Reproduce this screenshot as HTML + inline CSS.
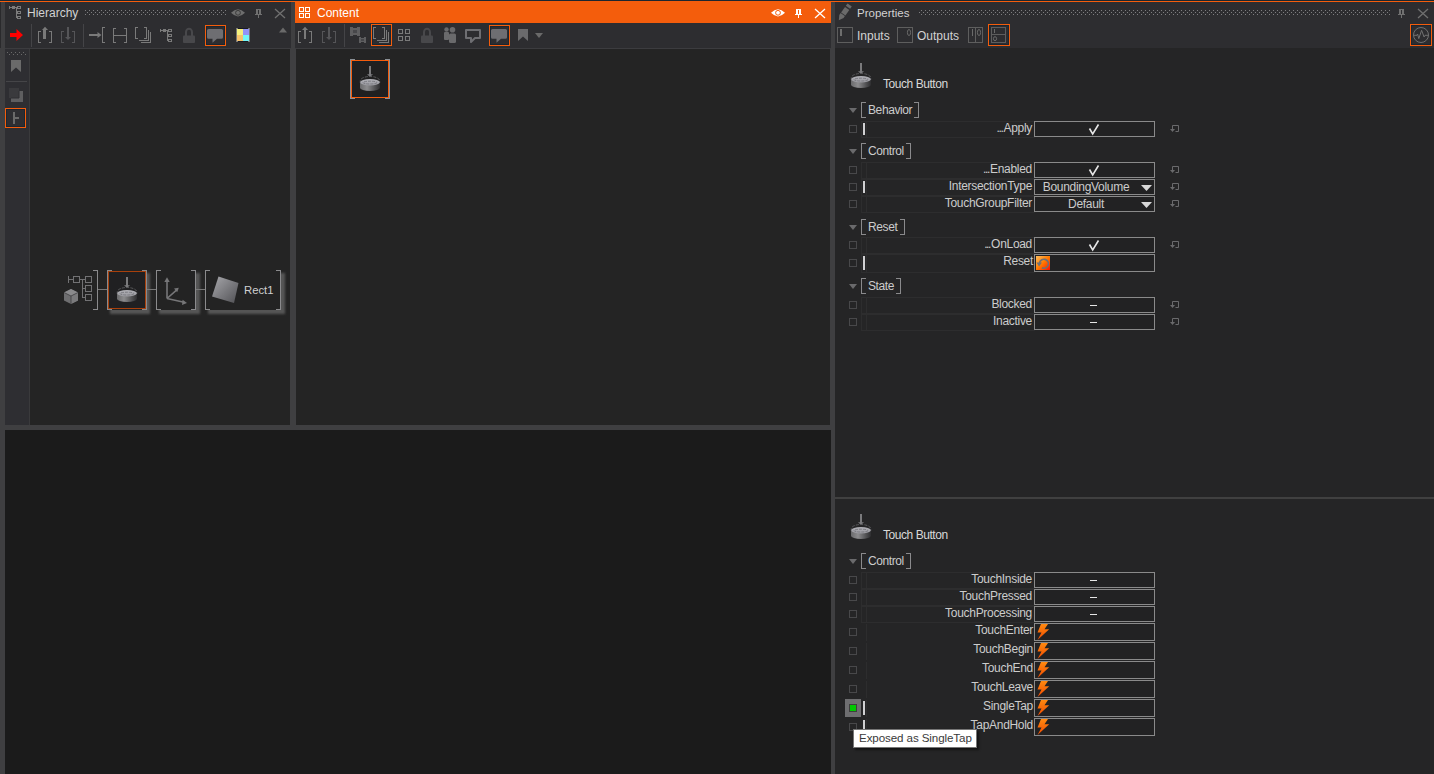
<!DOCTYPE html>
<html><head><meta charset="utf-8">
<style>
*{margin:0;padding:0;box-sizing:border-box}
html,body{width:1434px;height:774px;overflow:hidden;background:#3f3f41;font-family:"Liberation Sans",sans-serif;}
.a{position:absolute}
.t{position:absolute;white-space:nowrap;color:#d2d2d2;font-size:12px;line-height:14px}
.p{position:absolute;white-space:nowrap;color:#cccccc;font-size:12px;letter-spacing:-0.3px;line-height:13px}
.el{letter-spacing:-1.35px;margin-right:1px}
svg{position:absolute;left:0;top:0}
</style></head><body>
<div class="a" style="left:0px;top:0px;width:1434px;height:1px;background:#1c2630;"></div><div class="a" style="left:0px;top:1px;width:1434px;height:1px;background:#f45d0c;"></div><div class="a" style="left:5px;top:2px;width:286px;height:46px;background:#2d2d30;"></div><div class="a" style="left:0px;top:2px;width:1px;height:46px;background:#2a2a2c;"></div><div class="a" style="left:5px;top:48px;width:286px;height:1px;background:#3c3c3f;"></div><div class="a" style="left:5px;top:49px;width:24px;height:376px;background:#2e2e32;"></div><div class="a" style="left:29px;top:49px;width:1px;height:376px;background:#3a3a3c;"></div><div class="a" style="left:30px;top:49px;width:260px;height:376px;background:#242424;"></div><div class="a" style="left:295px;top:2px;width:536px;height:21px;background:#f45d0c;"></div><div class="a" style="left:295px;top:23px;width:536px;height:25px;background:#2d2d30;"></div><div class="a" style="left:295px;top:48px;width:536px;height:1px;background:#3c3c3f;"></div><div class="a" style="left:296px;top:49px;width:534px;height:376px;background:#242424;"></div><div class="a" style="left:5px;top:430px;width:826px;height:344px;background:#1b1b1b;"></div><div class="a" style="left:835px;top:2px;width:599px;height:46px;background:#2d2d30;"></div><div class="a" style="left:835px;top:48px;width:599px;height:449px;background:#252526;"></div><div class="a" style="left:835px;top:497px;width:599px;height:2px;background:#404040;"></div><div class="a" style="left:835px;top:499px;width:599px;height:275px;background:#252526;"></div><svg width="1434" height="774" viewBox="0 0 1434 774"><defs><pattern id="dots" x="0" y="0" width="4" height="4" patternUnits="userSpaceOnUse"><rect x="1" y="2" width="1" height="1" fill="#7e7e80"/><rect x="3" y="0" width="1" height="1" fill="#7e7e80"/></pattern><pattern id="dots2" x="0" y="0" width="4" height="4" patternUnits="userSpaceOnUse"><rect x="3" y="0" width="1" height="1" fill="#6a6a6a"/><rect x="1" y="2" width="1" height="1" fill="#6a6a6a"/></pattern></defs><rect x="85" y="10" width="142" height="5" fill="url(#dots)"/><rect x="919" y="10" width="472" height="5" fill="url(#dots)"/><rect x="7" y="52" width="20" height="3" fill="url(#dots2)"/><g fill="none" stroke="#7c7c7c" stroke-width="1" shape-rendering="crispEdges"><path d="M9.5 6 V9 M9 7.5 H17 M16.5 7.5 V17.5 M16.5 12.5 H18 M16.5 17.5 H18"/><rect x="12.5" y="6.5" width="2" height="2"/><rect x="17.5" y="6.5" width="3" height="2"/><rect x="17.5" y="11.5" width="3" height="2"/><rect x="17.5" y="16.5" width="3" height="2"/></g><path d="M231 12.8 Q238 5.5 245 12.8 Q238 20 231 12.8Z" fill="#6e6e6e"/><circle cx="238" cy="12.8" r="2.4" fill="none" stroke="#3a3a3a" stroke-width="1"/><g fill="#707070" shape-rendering="crispEdges"><rect x="256" y="9" width="5" height="1"/><rect x="256" y="9" width="2" height="5"/><rect x="259" y="9" width="2" height="5"/><rect x="255" y="14" width="7" height="1"/><rect x="258" y="15" width="1" height="3"/></g><path d="M275 9 L285 18 M285 9 L275 18" stroke="#707070" stroke-width="1.3" fill="none"/><path d="M10 33H16.5V29L23 35L16.5 41V37H10Z" fill="#ff0000"/><rect x="31" y="24" width="1" height="23" fill="#444447"/><rect x="83" y="24" width="1" height="23" fill="#444447"/><path d="M41 31.5H38.5V42.5H41" fill="none" stroke="#7a7a7a" shape-rendering="crispEdges"/><path d="M49 31.5H51.5V42.5H49" fill="none" stroke="#7a7a7a" shape-rendering="crispEdges"/><path d="M44 39V29.5" stroke="#7a7a7a" stroke-width="2" fill="#7a7a7a"/><path d="M42 30L45 26.8L48 30Z" fill="#7a7a7a"/><rect x="44" y="29" width="2" height="10" fill="#7a7a7a"/><path d="M64 31.5H61.5V42.5H64" fill="none" stroke="#555558" shape-rendering="crispEdges"/><path d="M72 31.5H74.5V42.5H72" fill="none" stroke="#555558" shape-rendering="crispEdges"/><rect x="67" y="27" width="2" height="10" fill="#555558"/><path d="M65 37L68 40L71 37Z" fill="#555558"/><rect x="89" y="34" width="9" height="2" fill="#7a7a7a"/><path d="M97.5 32L101.5 35L97.5 38Z" fill="#7a7a7a"/><path d="M105 27.5H102.5V42.5H105" fill="none" stroke="#7a7a7a" shape-rendering="crispEdges"/><path d="M116 28.5H113.5V42.5H116" fill="none" stroke="#7a7a7a" shape-rendering="crispEdges"/><path d="M124 28.5H126.5V42.5H124" fill="none" stroke="#7a7a7a" shape-rendering="crispEdges"/><rect x="113" y="35" width="14" height="1" fill="#7a7a7a"/><path d="M138 27.5H135.5V38.5H138" fill="none" stroke="#7a7a7a" shape-rendering="crispEdges"/><path d="M144 27.5H146.5V38.5H144" fill="none" stroke="#7a7a7a" shape-rendering="crispEdges"/><path d="M139 40.5H148.5V30 M141 42.5H150.5V32" fill="none" stroke="#7a7a7a" shape-rendering="crispEdges"/><g fill="none" stroke="#7a7a7a" stroke-width="1" shape-rendering="crispEdges"><path d="M160.5 29 V32 M160 30.5 H168 M167.5 30.5 V40.5 M167.5 35.5 H169 M167.5 40.5 H169"/><rect x="163.5" y="29.5" width="2" height="2"/><rect x="168.5" y="29.5" width="3" height="2"/><rect x="168.5" y="34.5" width="3" height="2"/><rect x="168.5" y="39.5" width="3" height="2"/></g><rect x="183" y="35.5" width="12" height="7.5" rx="1" fill="#48484b"/><path d="M186 36V32A3 3.3 0 0 1 192 32V36" fill="none" stroke="#48484b" stroke-width="2"/><rect x="205.5" y="25.5" width="20" height="20" fill="none" stroke="#f45d0c" shape-rendering="crispEdges"/><rect x="206.5" y="26.5" width="18" height="18" fill="none" stroke="#1d2630" shape-rendering="crispEdges"/><path d="M208.5 29H221.5A1.5 1.5 0 0 1 223 30.5V37.3A1.5 1.5 0 0 1 221.5 38.8H217L212.5 42.8V38.8H208.5A1.5 1.5 0 0 1 207 37.3V30.5A1.5 1.5 0 0 1 208.5 29Z" fill="#6e6e72"/><rect x="236" y="28" width="14" height="14" fill="#777"/><rect x="237" y="29" width="6" height="6" fill="#f4f07c"/><rect x="243" y="29" width="6" height="6" fill="#9393f7"/><rect x="237" y="35" width="6" height="6" fill="#f6c36c"/><rect x="243" y="35" width="6" height="6" fill="#72f6f6"/><rect x="238" y="28" width="10" height="1" fill="#1a1a22"/><rect x="238" y="41" width="10" height="1" fill="#1a1a22"/><path d="M279 32.5L283 27.5L287 32.5Z" fill="#6a6a6a"/><path d="M11 60H21V72L16 67.5L11 72Z" fill="#6a6a6a"/><rect x="6" y="81" width="21" height="1" fill="#454548"/><rect x="9" y="88" width="10" height="10" fill="#3a3a3d"/><path d="M19 91H23V102H11V98H19Z" fill="#5e5e60"/><path d="M19 91V98H11" fill="none" stroke="#2e2e32" stroke-width="1"/><rect x="5.5" y="108.5" width="20" height="19" fill="none" stroke="#f45d0c" shape-rendering="crispEdges"/><rect x="6.5" y="109.5" width="18" height="17" fill="none" stroke="#1d2630" shape-rendering="crispEdges"/><rect x="13" y="112" width="2" height="12" fill="#6a6a6a"/><rect x="15" y="117" width="4" height="2" fill="#6a6a6a"/><g fill="none" stroke="#fff" shape-rendering="crispEdges"><rect x="299.5" y="7.5" width="4" height="4"/><rect x="305.5" y="7.5" width="4" height="4"/><rect x="299.5" y="13.5" width="4" height="4"/><rect x="305.5" y="13.5" width="4" height="4"/></g><path d="M771 12.8 Q778 5.5 785 12.8 Q778 20 771 12.8Z" fill="#ffffff"/><circle cx="778" cy="12.8" r="2.4" fill="none" stroke="#f45d0c" stroke-width="1"/><g fill="#ffffff" shape-rendering="crispEdges"><rect x="796" y="9" width="5" height="1"/><rect x="796" y="9" width="2" height="5"/><rect x="799" y="9" width="2" height="5"/><rect x="795" y="14" width="7" height="1"/><rect x="798" y="15" width="1" height="3"/></g><path d="M815 9 L825 18 M825 9 L815 18" stroke="#ffffff" stroke-width="1.3" fill="none"/><path d="M301 31.5H298.5V42.5H301" fill="none" stroke="#7a7a7a" shape-rendering="crispEdges"/><path d="M309 31.5H311.5V42.5H309" fill="none" stroke="#7a7a7a" shape-rendering="crispEdges"/><path d="M302 30L305 26.8L308 30Z" fill="#7a7a7a"/><rect x="304" y="29" width="2" height="10" fill="#7a7a7a"/><path d="M325 31.5H322.5V42.5H325" fill="none" stroke="#555558" shape-rendering="crispEdges"/><path d="M333 31.5H335.5V42.5H333" fill="none" stroke="#555558" shape-rendering="crispEdges"/><rect x="328" y="27" width="2" height="10" fill="#555558"/><path d="M326 37L329 40L332 37Z" fill="#555558"/><rect x="344" y="24" width="1" height="23" fill="#444447"/><path d="M350 27H353V28H357V27H360V36H357V35H353V36H350Z M353 30V33H357V30Z" fill="#5e5e60" fill-rule="evenodd"/><rect x="353" y="30" width="4" height="3" fill="#47474a"/><path d="M359 37H361V38H364V37H366V43H364V42H361V43H359Z M361 39V41H364V39Z" fill="#5e5e60" fill-rule="evenodd"/><rect x="361" y="39" width="3" height="2" fill="#47474a"/><rect x="371.5" y="24.5" width="20" height="21" fill="none" stroke="#f45d0c" shape-rendering="crispEdges"/><rect x="372.5" y="25.5" width="18" height="19" fill="none" stroke="#1d2630" shape-rendering="crispEdges"/><path d="M376 27.5H373.5V38.5H376" fill="none" stroke="#7a7a7a" shape-rendering="crispEdges"/><path d="M382 27.5H384.5V38.5H382" fill="none" stroke="#7a7a7a" shape-rendering="crispEdges"/><path d="M377 40.5H386.5V30 M379 42.5H388.5V32" fill="none" stroke="#7a7a7a" shape-rendering="crispEdges"/><g fill="none" stroke="#7a7a7a" shape-rendering="crispEdges"><rect x="398.5" y="29.5" width="4" height="4"/><rect x="405.5" y="29.5" width="4" height="4"/><rect x="398.5" y="36.5" width="4" height="4"/><rect x="405.5" y="36.5" width="4" height="4"/></g><rect x="421" y="35.5" width="12" height="7.5" rx="1" fill="#48484b"/><path d="M424 36V32A3 3.3 0 0 1 430 32V36" fill="none" stroke="#48484b" stroke-width="2"/><g fill="#6a6a6c"><circle cx="446.5" cy="29.5" r="2.2"/><rect x="444" y="32" width="5" height="8" rx="1"/><circle cx="452.5" cy="29.8" r="2.8"/><rect x="449" y="33.5" width="7" height="9.5" rx="1.5"/></g><path d="M466 30H480V38H475L471 42V38H466Z" fill="none" stroke="#6e6e72" stroke-width="2" stroke-linejoin="round"/><rect x="489.5" y="25.5" width="20" height="20" fill="none" stroke="#f45d0c" shape-rendering="crispEdges"/><rect x="490.5" y="26.5" width="18" height="18" fill="none" stroke="#1d2630" shape-rendering="crispEdges"/><path d="M492.5 29H505.5A1.5 1.5 0 0 1 507 30.5V37.3A1.5 1.5 0 0 1 505.5 38.8H501L496.5 42.8V38.8H492.5A1.5 1.5 0 0 1 491 37.3V30.5A1.5 1.5 0 0 1 492.5 29Z" fill="#6e6e72"/><path d="M518 29H528V41L523 36.5L518 41Z" fill="#6a6a6c"/><path d="M535 33L539 38L543 33Z" fill="#6a6a6a"/><path d="M838.8 20.2L839.3 14.9L840.6 13.1L844.9 16.1L843.6 17.9Z" fill="#6a6a6a"/><path d="M841.1 12.4L845.0 7.0L849.3 10.0L845.4 15.4Z" fill="#6a6a6a"/><path d="M845.8 5.8L847.6 3.4L851.8 6.4L850.1 8.8Z" fill="#6a6a6a"/><rect x="837.5" y="27.5" width="15" height="15" fill="none" stroke="#5e5e5e" shape-rendering="crispEdges"/><rect x="840" y="29" width="2" height="7" fill="#6e6e6e"/><rect x="897.5" y="27.5" width="15" height="15" fill="none" stroke="#5e5e5e" shape-rendering="crispEdges"/><ellipse cx="909" cy="32.5" rx="1.6" ry="3" fill="none" stroke="#6a6a6a" stroke-width="1"/><rect x="968.5" y="27.5" width="14" height="15" fill="none" stroke="#5e5e5e" shape-rendering="crispEdges"/><rect x="975" y="28" width="1" height="14" fill="#5e5e5e"/><rect x="972" y="29" width="1" height="7" fill="#6a6a6a"/><ellipse cx="979" cy="32.5" rx="1.6" ry="3" fill="none" stroke="#6a6a6a"/><rect x="988.5" y="24.5" width="21" height="21" fill="none" stroke="#f45d0c" shape-rendering="crispEdges"/><rect x="989.5" y="25.5" width="19" height="19" fill="none" stroke="#1d2630" shape-rendering="crispEdges"/><rect x="991.5" y="27.5" width="14" height="15" fill="none" stroke="#5e5e5e" shape-rendering="crispEdges"/><rect x="992" y="34" width="13" height="1" fill="#5e5e5e"/><rect x="994" y="29" width="1" height="4" fill="#6a6a6a"/><ellipse cx="995" cy="38.7" rx="1.6" ry="2" fill="none" stroke="#6a6a6a"/><g fill="#707070" shape-rendering="crispEdges"><rect x="1399" y="9" width="5" height="1"/><rect x="1399" y="9" width="2" height="5"/><rect x="1402" y="9" width="2" height="5"/><rect x="1398" y="14" width="7" height="1"/><rect x="1401" y="15" width="1" height="3"/></g><path d="M1418 9 L1428 18 M1428 9 L1418 18" stroke="#707070" stroke-width="1.3" fill="none"/><rect x="1410.5" y="24.5" width="21" height="21" fill="none" stroke="#f45d0c" shape-rendering="crispEdges"/><rect x="1411.5" y="25.5" width="19" height="19" fill="none" stroke="#1d2630" shape-rendering="crispEdges"/><circle cx="1421" cy="35" r="7.5" fill="none" stroke="#707070"/><path d="M1414 35.3H1417L1417.6 34L1418.8 38.6L1421.6 30.3L1424.1 37L1425 35.3H1428.5" fill="none" stroke="#707070" stroke-linejoin="round"/><defs><linearGradient id="cyl" x1="0" x2="1" y1="0" y2="0"><stop offset="0" stop-color="#6a6a6c"/><stop offset=".35" stop-color="#8c8c8e"/><stop offset=".8" stop-color="#4a4a4c"/><stop offset="1" stop-color="#2e2e30"/></linearGradient><linearGradient id="cyltop" x1="0" x2="0" y1="0" y2="1"><stop offset="0" stop-color="#b0b0b6"/><stop offset="1" stop-color="#9a9aa0"/></linearGradient><linearGradient id="rectg" x1="0" y1="0" x2="1" y2="1"><stop offset="0" stop-color="#a8a8ac"/><stop offset="1" stop-color="#505054"/></linearGradient><symbol id="tb" viewBox="0 0 20 25" overflow="visible"><rect x="9" y="0" width="2" height="9" fill="#7a7a7c"/><path d="M7 8.3L13 8.3L10 11Z" fill="#7a7a7c"/><path d="M0 16.5V21.7A10 3.3 0 0 0 20 21.7V16.5Z" fill="url(#cyl)"/><path d="M0.3 17V14.8A9.7 4.3 0 0 1 19.7 14.8V17" fill="none" stroke="#58585a" stroke-width="1" stroke-dasharray="3 1.2"/><ellipse cx="10" cy="16.3" rx="9.8" ry="3.2" fill="url(#cyltop)"/><ellipse cx="10" cy="16.6" rx="7" ry="1.4" fill="none" stroke="#7c7c82" stroke-width="1" stroke-dasharray="3 1"/></symbol></defs><g fill="none" stroke="#727274" shape-rendering="crispEdges"><path d="M68.5 276V283M68 279.5H73M80 279.5H85M82.5 279.5V297.5M82.5 288.5H85M82.5 297.5H85"/><rect x="73.5" y="276.5" width="6" height="6"/><rect x="85.5" y="276.5" width="6" height="6"/><rect x="85.5" y="285.5" width="6" height="6"/><rect x="85.5" y="294.5" width="6" height="6"/></g><path d="M64 292.5L71 289L78 292.5V300.5L71 304L64 300.5Z" fill="#6e6e70"/><path d="M71 296L78 292.5V300.5L71 304Z" fill="#7a7a7c"/><path d="M64 292.5L71 289L78 292.5L71 296Z" fill="#8a8a8c"/><path d="M64 292.5L71 296L78 292.5M71 296V304" fill="none" stroke="#3e3e40" stroke-width=".8"/><defs><filter id="blur1" x="-50%" y="-50%" width="200%" height="200%"><feGaussianBlur stdDeviation="1.3"/></filter></defs><rect x="110" y="273" width="40" height="41" fill="#555555" filter="url(#blur1)"/><rect x="107" y="270" width="39" height="40" fill="#232323"/><rect x="159" y="273" width="41" height="41" fill="#555555" filter="url(#blur1)"/><rect x="156" y="270" width="40" height="40" fill="#232323"/><rect x="208" y="273" width="77" height="41" fill="#555555" filter="url(#blur1)"/><rect x="205" y="270" width="76" height="40" fill="#232323"/><path d="M93 270.5H97.5V309.5H93" fill="none" stroke="#8a8a8c" shape-rendering="crispEdges"/><rect x="98" y="289" width="9" height="1" fill="#787878"/><rect x="146" y="289" width="10" height="1" fill="#787878"/><rect x="196" y="289" width="9" height="1" fill="#787878"/><path d="M112 270.5H107.5V309.5H112" fill="none" stroke="#8a8a8c" shape-rendering="crispEdges"/><path d="M142 270.5H146.5V309.5H142" fill="none" stroke="#8a8a8c" shape-rendering="crispEdges"/><rect x="108.5" y="271.5" width="37" height="37" fill="#202022" stroke="#a8400c" shape-rendering="crispEdges"/><g transform="translate(117 277)"><rect x="9" y="0" width="2" height="9" fill="#7a7a7c"/><path d="M7 8.3L13 8.3L10 11Z" fill="#7a7a7c"/><path d="M0 16.5V21.7A10 3.3 0 0 0 20 21.7V16.5Z" fill="url(#cyl)"/><path d="M0.3 17V14.8A9.7 4.3 0 0 1 19.7 14.8V17" fill="none" stroke="#58585a" stroke-width="1" stroke-dasharray="3 1.2"/><ellipse cx="10" cy="16.3" rx="9.8" ry="3.2" fill="url(#cyltop)"/><ellipse cx="10" cy="16.6" rx="7" ry="1.4" fill="none" stroke="#7c7c82" stroke-width="1" stroke-dasharray="3 1"/></g><path d="M161 270.5H156.5V309.5H161" fill="none" stroke="#8a8a8c" shape-rendering="crispEdges"/><path d="M191 270.5H195.5V309.5H191" fill="none" stroke="#8a8a8c" shape-rendering="crispEdges"/><g stroke="#767678" stroke-width="1.6" fill="none"><path d="M167 298.5V281M167 298.5L176.5 290.2M167 298.5L184 302.3"/></g><path d="M164.3 282L167 277.3L169.7 282Z" fill="#767678"/><path d="M174 288.6L178.8 287.8L177.2 292.2Z" fill="#767678"/><path d="M182.6 299.8L187 303L182 305Z" fill="#767678"/><path d="M210 270.5H205.5V309.5H210" fill="none" stroke="#8a8a8c" shape-rendering="crispEdges"/><path d="M276 270.5H280.5V309.5H276" fill="none" stroke="#8a8a8c" shape-rendering="crispEdges"/><path d="M218.5 276.5L238.5 283L234 303L212 296.5Z" fill="url(#rectg)"/><path d="M355 59.5H350.5V98.5H355" fill="none" stroke="#8a9096" shape-rendering="crispEdges"/><path d="M385 59.5H389.5V98.5H385" fill="none" stroke="#8a9096" shape-rendering="crispEdges"/><rect x="351.5" y="60.5" width="37" height="37" fill="#1f2429" stroke="#f45d0c" shape-rendering="crispEdges"/><rect x="352.5" y="61.5" width="35" height="35" fill="#202020" stroke="#18212a" shape-rendering="crispEdges"/><g transform="translate(360 66)"><rect x="9" y="0" width="2" height="9" fill="#7a7a7c"/><path d="M7 8.3L13 8.3L10 11Z" fill="#7a7a7c"/><path d="M0 16.5V21.7A10 3.3 0 0 0 20 21.7V16.5Z" fill="url(#cyl)"/><path d="M0.3 17V14.8A9.7 4.3 0 0 1 19.7 14.8V17" fill="none" stroke="#58585a" stroke-width="1" stroke-dasharray="3 1.2"/><ellipse cx="10" cy="16.3" rx="9.8" ry="3.2" fill="url(#cyltop)"/><ellipse cx="10" cy="16.6" rx="7" ry="1.4" fill="none" stroke="#7c7c82" stroke-width="1" stroke-dasharray="3 1"/></g><g transform="translate(851 63)"><rect x="9" y="0" width="2" height="9" fill="#7a7a7c"/><path d="M7 8.3L13 8.3L10 11Z" fill="#7a7a7c"/><path d="M0 16.5V21.7A10 3.3 0 0 0 20 21.7V16.5Z" fill="url(#cyl)"/><path d="M0.3 17V14.8A9.7 4.3 0 0 1 19.7 14.8V17" fill="none" stroke="#58585a" stroke-width="1" stroke-dasharray="3 1.2"/><ellipse cx="10" cy="16.3" rx="9.8" ry="3.2" fill="url(#cyltop)"/><ellipse cx="10" cy="16.6" rx="7" ry="1.4" fill="none" stroke="#7c7c82" stroke-width="1" stroke-dasharray="3 1"/></g><g transform="translate(851 514)"><rect x="9" y="0" width="2" height="9" fill="#7a7a7c"/><path d="M7 8.3L13 8.3L10 11Z" fill="#7a7a7c"/><path d="M0 16.5V21.7A10 3.3 0 0 0 20 21.7V16.5Z" fill="url(#cyl)"/><path d="M0.3 17V14.8A9.7 4.3 0 0 1 19.7 14.8V17" fill="none" stroke="#58585a" stroke-width="1" stroke-dasharray="3 1.2"/><ellipse cx="10" cy="16.3" rx="9.8" ry="3.2" fill="url(#cyltop)"/><ellipse cx="10" cy="16.6" rx="7" ry="1.4" fill="none" stroke="#7c7c82" stroke-width="1" stroke-dasharray="3 1"/></g><defs><linearGradient id="boltg" x1="0" y1="0" x2="0" y2="1"><stop offset="0" stop-color="#ff8a10"/><stop offset="1" stop-color="#f04a00"/></linearGradient><symbol id="bolt" viewBox="0 0 14 16" overflow="visible"><path d="M5 0H12L8.5 5.2H13.2L1.5 16L5.5 8.5H1.5Z" fill="url(#boltg)"/></symbol><linearGradient id="rstg" x1="0" y1="0" x2="1" y2="1"><stop offset="0" stop-color="#ffc060"/><stop offset=".5" stop-color="#ff7a00"/><stop offset="1" stop-color="#ff1000"/></linearGradient><symbol id="rst" viewBox="0 0 15 15" overflow="visible"><rect x="0" y="0" width="14" height="14" fill="url(#rstg)"/><path d="M3.5 7A4.5 4.5 0 1 1 6 11.8" fill="none" stroke="#707074" stroke-width="1.6"/><path d="M0.5 6.5H6L3 10.5Z" fill="#707074"/></symbol></defs><path d="M849 108H857L853 113Z" fill="#6a6a6c"/><path d="M866 102.5H861.5V117.5H866M914 102.5H918.5V117.5H914" fill="none" stroke="#8a8a8c" shape-rendering="crispEdges"/><rect x="849.5" y="125.5" width="7" height="7" fill="none" stroke="#48484a" shape-rendering="crispEdges"/><rect x="861.5" y="121.5" width="173" height="16" fill="none" stroke="#2d2d2e" shape-rendering="crispEdges"/><rect x="866" y="122" width="1" height="15" fill="#2d2d2e"/><rect x="863" y="123" width="2" height="12" fill="#d0d0d2"/><rect x="1034.5" y="121.5" width="120" height="15" fill="#222223" stroke="#8a8a8a" shape-rendering="crispEdges"/><path d="M1089.5 128.5L1092.7 134L1098.5 124.5" fill="none" stroke="#e6e6e6" stroke-width="1.6"/><path d="M1175.5 131.5H1178.5V125.5H1172.5V129.5" fill="none" stroke="#6a6a6c" stroke-width="1"/><path d="M1170 129H1175L1172.5 132Z" fill="#6a6a6c"/><path d="M849 149H857L853 154Z" fill="#6a6a6c"/><path d="M866 143.5H861.5V158.5H866M906 143.5H910.5V158.5H906" fill="none" stroke="#8a8a8c" shape-rendering="crispEdges"/><rect x="849.5" y="166.5" width="7" height="7" fill="none" stroke="#48484a" shape-rendering="crispEdges"/><rect x="861.5" y="162.5" width="173" height="16" fill="none" stroke="#2d2d2e" shape-rendering="crispEdges"/><rect x="866" y="163" width="1" height="15" fill="#2d2d2e"/><rect x="1034.5" y="162.5" width="120" height="15" fill="#222223" stroke="#8a8a8a" shape-rendering="crispEdges"/><path d="M1089.5 169.5L1092.7 175L1098.5 165.5" fill="none" stroke="#e6e6e6" stroke-width="1.6"/><path d="M1175.5 172.5H1178.5V166.5H1172.5V170.5" fill="none" stroke="#6a6a6c" stroke-width="1"/><path d="M1170 170H1175L1172.5 173Z" fill="#6a6a6c"/><rect x="849.5" y="183.5" width="7" height="7" fill="none" stroke="#48484a" shape-rendering="crispEdges"/><rect x="861.5" y="179.5" width="173" height="16" fill="none" stroke="#2d2d2e" shape-rendering="crispEdges"/><rect x="866" y="180" width="1" height="15" fill="#2d2d2e"/><rect x="863" y="181" width="2" height="12" fill="#d0d0d2"/><rect x="1034.5" y="179.5" width="120" height="15" fill="#222223" stroke="#8a8a8a" shape-rendering="crispEdges"/><path d="M1141 185H1152L1146.5 191Z" fill="#d8d8d8"/><path d="M1175.5 189.5H1178.5V183.5H1172.5V187.5" fill="none" stroke="#6a6a6c" stroke-width="1"/><path d="M1170 187H1175L1172.5 190Z" fill="#6a6a6c"/><rect x="849.5" y="200.5" width="7" height="7" fill="none" stroke="#48484a" shape-rendering="crispEdges"/><rect x="861.5" y="196.5" width="173" height="16" fill="none" stroke="#2d2d2e" shape-rendering="crispEdges"/><rect x="866" y="197" width="1" height="15" fill="#2d2d2e"/><rect x="1034.5" y="196.5" width="120" height="15" fill="#222223" stroke="#8a8a8a" shape-rendering="crispEdges"/><path d="M1141 202H1152L1146.5 208Z" fill="#d8d8d8"/><path d="M1175.5 206.5H1178.5V200.5H1172.5V204.5" fill="none" stroke="#6a6a6c" stroke-width="1"/><path d="M1170 204H1175L1172.5 207Z" fill="#6a6a6c"/><path d="M849 225H857L853 230Z" fill="#6a6a6c"/><path d="M866 219.5H861.5V234.5H866M900 219.5H904.5V234.5H900" fill="none" stroke="#8a8a8c" shape-rendering="crispEdges"/><rect x="849.5" y="241.5" width="7" height="7" fill="none" stroke="#48484a" shape-rendering="crispEdges"/><rect x="861.5" y="237.5" width="173" height="16" fill="none" stroke="#2d2d2e" shape-rendering="crispEdges"/><rect x="866" y="238" width="1" height="15" fill="#2d2d2e"/><rect x="1034.5" y="237.5" width="120" height="15" fill="#222223" stroke="#8a8a8a" shape-rendering="crispEdges"/><path d="M1089.5 244.5L1092.7 250L1098.5 240.5" fill="none" stroke="#e6e6e6" stroke-width="1.6"/><path d="M1175.5 247.5H1178.5V241.5H1172.5V245.5" fill="none" stroke="#6a6a6c" stroke-width="1"/><path d="M1170 245H1175L1172.5 248Z" fill="#6a6a6c"/><rect x="849.5" y="259.5" width="7" height="7" fill="none" stroke="#48484a" shape-rendering="crispEdges"/><rect x="861.5" y="254.5" width="173" height="18" fill="none" stroke="#2d2d2e" shape-rendering="crispEdges"/><rect x="866" y="255" width="1" height="17" fill="#2d2d2e"/><rect x="863" y="256" width="2" height="14" fill="#d0d0d2"/><rect x="1034.5" y="254.5" width="120" height="17" fill="#222223" stroke="#8a8a8a" shape-rendering="crispEdges"/><g transform="translate(1036 256)"><rect x="0" y="0" width="14" height="14" fill="url(#rstg)"/><path d="M3.5 7A4.5 4.5 0 1 1 6 11.8" fill="none" stroke="#707074" stroke-width="1.6"/><path d="M0.5 6.5H6L3 10.5Z" fill="#707074"/></g><path d="M849 284H857L853 289Z" fill="#6a6a6c"/><path d="M866 278.5H861.5V293.5H866M896 278.5H900.5V293.5H896" fill="none" stroke="#8a8a8c" shape-rendering="crispEdges"/><rect x="849.5" y="301.5" width="7" height="7" fill="none" stroke="#48484a" shape-rendering="crispEdges"/><rect x="861.5" y="297.5" width="173" height="16" fill="none" stroke="#2d2d2e" shape-rendering="crispEdges"/><rect x="866" y="298" width="1" height="15" fill="#2d2d2e"/><rect x="1034.5" y="297.5" width="120" height="15" fill="#222223" stroke="#8a8a8a" shape-rendering="crispEdges"/><rect x="1090" y="305" width="7" height="1" fill="#e6e6e6"/><path d="M1175.5 307.5H1178.5V301.5H1172.5V305.5" fill="none" stroke="#6a6a6c" stroke-width="1"/><path d="M1170 305H1175L1172.5 308Z" fill="#6a6a6c"/><rect x="849.5" y="318.5" width="7" height="7" fill="none" stroke="#48484a" shape-rendering="crispEdges"/><rect x="861.5" y="314.5" width="173" height="16" fill="none" stroke="#2d2d2e" shape-rendering="crispEdges"/><rect x="866" y="315" width="1" height="15" fill="#2d2d2e"/><rect x="1034.5" y="314.5" width="120" height="15" fill="#222223" stroke="#8a8a8a" shape-rendering="crispEdges"/><rect x="1090" y="322" width="7" height="1" fill="#e6e6e6"/><path d="M1175.5 324.5H1178.5V318.5H1172.5V322.5" fill="none" stroke="#6a6a6c" stroke-width="1"/><path d="M1170 322H1175L1172.5 325Z" fill="#6a6a6c"/><path d="M849 559H857L853 564Z" fill="#6a6a6c"/><path d="M866 553.5H861.5V568.5H866M906 553.5H910.5V568.5H906" fill="none" stroke="#8a8a8c" shape-rendering="crispEdges"/><rect x="849.5" y="576.5" width="7" height="7" fill="none" stroke="#48484a" shape-rendering="crispEdges"/><rect x="861.5" y="572.5" width="173" height="16" fill="none" stroke="#2d2d2e" shape-rendering="crispEdges"/><rect x="866" y="573" width="1" height="15" fill="#2d2d2e"/><rect x="1034.5" y="572.5" width="120" height="15" fill="#222223" stroke="#8a8a8a" shape-rendering="crispEdges"/><rect x="1090" y="580" width="7" height="1" fill="#e6e6e6"/><rect x="849.5" y="593.5" width="7" height="7" fill="none" stroke="#48484a" shape-rendering="crispEdges"/><rect x="861.5" y="589.5" width="173" height="16" fill="none" stroke="#2d2d2e" shape-rendering="crispEdges"/><rect x="866" y="590" width="1" height="15" fill="#2d2d2e"/><rect x="1034.5" y="589.5" width="120" height="15" fill="#222223" stroke="#8a8a8a" shape-rendering="crispEdges"/><rect x="1090" y="597" width="7" height="1" fill="#e6e6e6"/><rect x="849.5" y="610.5" width="7" height="7" fill="none" stroke="#48484a" shape-rendering="crispEdges"/><rect x="861.5" y="606.5" width="173" height="16" fill="none" stroke="#2d2d2e" shape-rendering="crispEdges"/><rect x="866" y="607" width="1" height="15" fill="#2d2d2e"/><rect x="1034.5" y="606.5" width="120" height="15" fill="#222223" stroke="#8a8a8a" shape-rendering="crispEdges"/><rect x="1090" y="614" width="7" height="1" fill="#e6e6e6"/><rect x="849.5" y="628.5" width="7" height="7" fill="none" stroke="#48484a" shape-rendering="crispEdges"/><rect x="866" y="624" width="1" height="17" fill="#2d2d2e"/><rect x="1034.5" y="623.5" width="120" height="17" fill="#222223" stroke="#8a8a8a" shape-rendering="crispEdges"/><g transform="translate(1036 624)"><path d="M5 0H12L8.5 5.2H13.2L1.5 16L5.5 8.5H1.5Z" fill="url(#boltg)"/></g><rect x="849.5" y="647.5" width="7" height="7" fill="none" stroke="#48484a" shape-rendering="crispEdges"/><rect x="866" y="643" width="1" height="17" fill="#2d2d2e"/><rect x="1034.5" y="642.5" width="120" height="17" fill="#222223" stroke="#8a8a8a" shape-rendering="crispEdges"/><g transform="translate(1036 643)"><path d="M5 0H12L8.5 5.2H13.2L1.5 16L5.5 8.5H1.5Z" fill="url(#boltg)"/></g><rect x="849.5" y="666.5" width="7" height="7" fill="none" stroke="#48484a" shape-rendering="crispEdges"/><rect x="866" y="662" width="1" height="17" fill="#2d2d2e"/><rect x="1034.5" y="661.5" width="120" height="17" fill="#222223" stroke="#8a8a8a" shape-rendering="crispEdges"/><g transform="translate(1036 662)"><path d="M5 0H12L8.5 5.2H13.2L1.5 16L5.5 8.5H1.5Z" fill="url(#boltg)"/></g><rect x="849.5" y="685.5" width="7" height="7" fill="none" stroke="#48484a" shape-rendering="crispEdges"/><rect x="866" y="681" width="1" height="17" fill="#2d2d2e"/><rect x="1034.5" y="680.5" width="120" height="17" fill="#222223" stroke="#8a8a8a" shape-rendering="crispEdges"/><g transform="translate(1036 681)"><path d="M5 0H12L8.5 5.2H13.2L1.5 16L5.5 8.5H1.5Z" fill="url(#boltg)"/></g><rect x="849.5" y="704.5" width="7" height="7" fill="none" stroke="#48484a" shape-rendering="crispEdges"/><rect x="866" y="700" width="1" height="17" fill="#2d2d2e"/><rect x="863" y="701" width="2" height="14" fill="#d0d0d2"/><rect x="1034.5" y="699.5" width="120" height="17" fill="#222223" stroke="#8a8a8a" shape-rendering="crispEdges"/><g transform="translate(1036 700)"><path d="M5 0H12L8.5 5.2H13.2L1.5 16L5.5 8.5H1.5Z" fill="url(#boltg)"/></g><rect x="849.5" y="723.5" width="7" height="7" fill="none" stroke="#48484a" shape-rendering="crispEdges"/><rect x="866" y="719" width="1" height="17" fill="#2d2d2e"/><rect x="863" y="720" width="2" height="14" fill="#d0d0d2"/><rect x="1034.5" y="718.5" width="120" height="17" fill="#222223" stroke="#8a8a8a" shape-rendering="crispEdges"/><g transform="translate(1036 719)"><path d="M5 0H12L8.5 5.2H13.2L1.5 16L5.5 8.5H1.5Z" fill="url(#boltg)"/></g><rect x="845" y="699" width="16" height="18" fill="#6e6e70"/><rect x="849" y="704" width="8" height="8" fill="#3e3e3e"/><rect x="850" y="705" width="6" height="6" fill="#00c800"/></svg><div class="t" style="left:27px;top:6px;">Hierarchy</div><div class="t" style="left:317px;top:6px;color:#fff">Content</div><div class="t" style="left:857px;top:6px;font-size:11.5px">Properties</div><div class="t" style="left:857px;top:29px;">Inputs</div><div class="t" style="left:917px;top:29px;">Outputs</div><div class="p" style="left:883px;top:78px;color:#d8d8d8;letter-spacing:-0.45px">Touch Button</div><div class="p" style="left:868px;top:104px;letter-spacing:-0.4px">Behavior</div><div class="p" style="right:402px;top:122px;"><span class=el>...</span>Apply</div><div class="p" style="left:868px;top:145px;letter-spacing:-0.4px">Control</div><div class="p" style="right:402px;top:163px;"><span class=el>...</span>Enabled</div><div class="p" style="right:402px;top:180px;">IntersectionType</div><div class="p" style="left:1035px;width:102px;text-align:center;top:181px">BoundingVolume</div><div class="p" style="right:402px;top:197px;">TouchGroupFilter</div><div class="p" style="left:1035px;width:102px;text-align:center;top:198px">Default</div><div class="p" style="left:868px;top:221px;letter-spacing:-0.4px">Reset</div><div class="p" style="right:402px;top:238px;"><span class=el>...</span>OnLoad</div><div class="p" style="right:401px;top:255px;">Reset</div><div class="p" style="left:868px;top:280px;letter-spacing:-0.4px">State</div><div class="p" style="right:402px;top:298px;">Blocked</div><div class="p" style="right:402px;top:315px;">Inactive</div><div class="p" style="left:883px;top:529px;color:#d8d8d8;letter-spacing:-0.45px">Touch Button</div><div class="p" style="left:868px;top:555px;letter-spacing:-0.4px">Control</div><div class="p" style="right:402px;top:573px;">TouchInside</div><div class="p" style="right:402px;top:590px;">TouchPressed</div><div class="p" style="right:402px;top:607px;">TouchProcessing</div><div class="p" style="right:401px;top:624px;">TouchEnter</div><div class="p" style="right:401px;top:643px;">TouchBegin</div><div class="p" style="right:401px;top:662px;">TouchEnd</div><div class="p" style="right:401px;top:681px;">TouchLeave</div><div class="p" style="right:401px;top:700px;">SingleTap</div><div class="p" style="right:401px;top:719px;">TapAndHold</div><div class="t" style="left:244px;top:283px;font-size:11.3px;color:#d0d0d0">Rect1</div><div class="a" style="left:853px;top:729px;width:124px;height:19px;background:#fff;border:1px solid #767676;box-shadow:2px 2px 2px rgba(0,0,0,.5)"></div><div class="t" style="left:859px;top:731px;color:#3a3a3a;font-size:11.6px;letter-spacing:-0.1px">Exposed as SingleTap</div></body></html>
